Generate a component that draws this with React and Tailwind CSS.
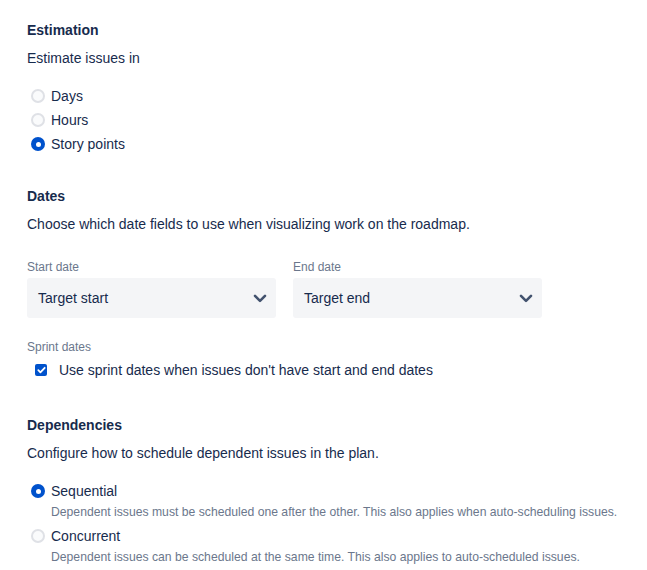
import { useState } from "react";

const Radio = ({ checked, label, onChange }) => (
  <label className="flex items-center h-6 cursor-pointer" onClick={onChange}>
    <span
      className={`w-[14px] h-[14px] rounded-full flex items-center justify-center ml-[4px] ${
        checked
          ? "bg-[#0052CC]"
          : "bg-[#FAFBFC] border-2 border-[#DFE1E6]"
      }`}
    >
      {checked && <span className="w-[5px] h-[5px] rounded-full bg-white" />}
    </span>
    <span className="ml-[6px] text-[14px] text-[#172B4D]">{label}</span>
  </label>
);

const Select = ({ label, value }) => (
  <div className="w-[249px]">
    <div className="text-[12px] leading-4 text-[#6B778C] font-medium">{label}</div>
    <div className="mt-[3px] h-10 rounded-[3px] bg-[#F4F5F7] flex items-center justify-between pl-[11px] pr-[9px]">
      <span className="text-[14px] text-[#172B4D]">{value}</span>
      <svg width="14" height="9" viewBox="0 0 14 9">
        <path
          d="M2 1.8L7 6.8L12 1.8"
          stroke="#42526E"
          strokeWidth="2.6"
          fill="none"
          strokeLinecap="round"
          strokeLinejoin="round"
        />
      </svg>
    </div>
  </div>
);

export default function App() {
  const [unit, setUnit] = useState("points");
  const [dep, setDep] = useState("seq");
  const [sprint, setSprint] = useState(true);

  return (
    <div
      className="min-h-screen bg-white pl-[27px] pt-5 text-[14px] leading-5 text-[#172B4D]"
      style={{ fontFamily: '"Liberation Sans", Arial, sans-serif' }}
    >
      <h2 className="font-semibold">Estimation</h2>
      <p className="mt-2">Estimate issues in</p>
      <div className="mt-4">
        <Radio label="Days" checked={unit === "days"} onChange={() => setUnit("days")} />
        <Radio label="Hours" checked={unit === "hours"} onChange={() => setUnit("hours")} />
        <Radio
          label="Story points"
          checked={unit === "points"}
          onChange={() => setUnit("points")}
        />
      </div>

      <h2 className="font-semibold mt-[30px]">Dates</h2>
      <p className="mt-2">
        Choose which date fields to use when visualizing work on the roadmap.
      </p>
      <div className="flex gap-[17px] mt-[25px]">
        <Select label="Start date" value="Target start" />
        <Select label="End date" value="Target end" />
      </div>

      <div className="mt-[21px] text-[12px] leading-4 text-[#6B778C] font-medium">
        Sprint dates
      </div>
      <label
        className="flex items-center h-5 mt-[5px] cursor-pointer"
        onClick={() => setSprint(!sprint)}
      >
        <span
          className={`ml-[8px] w-[12px] h-[12px] rounded-[2px] flex items-center justify-center ${
            sprint ? "bg-[#0052CC]" : "bg-[#FAFBFC] border-2 border-[#DFE1E6]"
          }`}
        >
          {sprint && (
            <svg width="9" height="8" viewBox="0 0 9 8">
              <path
                d="M1.3 4.2l2.1 2.1L7.7 1.8"
                stroke="white"
                strokeWidth="1.8"
                fill="none"
                strokeLinecap="round"
                strokeLinejoin="round"
              />
            </svg>
          )}
        </span>
        <span className="ml-[12px]">
          Use sprint dates when issues don't have start and end dates
        </span>
      </label>

      <h2 className="font-semibold mt-[35px]">Dependencies</h2>
      <p className="mt-2">Configure how to schedule dependent issues in the plan.</p>
      <div className="mt-4">
        <Radio label="Sequential" checked={dep === "seq"} onChange={() => setDep("seq")} />
        <p className="-mt-px mb-[2px] pl-[24px] text-[12.2px] leading-5 text-[#6B778C]">
          Dependent issues must be scheduled one after the other. This also applies when
          auto-scheduling issues.
        </p>
        <Radio label="Concurrent" checked={dep === "con"} onChange={() => setDep("con")} />
        <p className="-mt-px pl-[24px] text-[12.2px] leading-5 text-[#6B778C]">
          Dependent issues can be scheduled at the same time. This also applies to
          auto-scheduled issues.
        </p>
      </div>
    </div>
  );
}
